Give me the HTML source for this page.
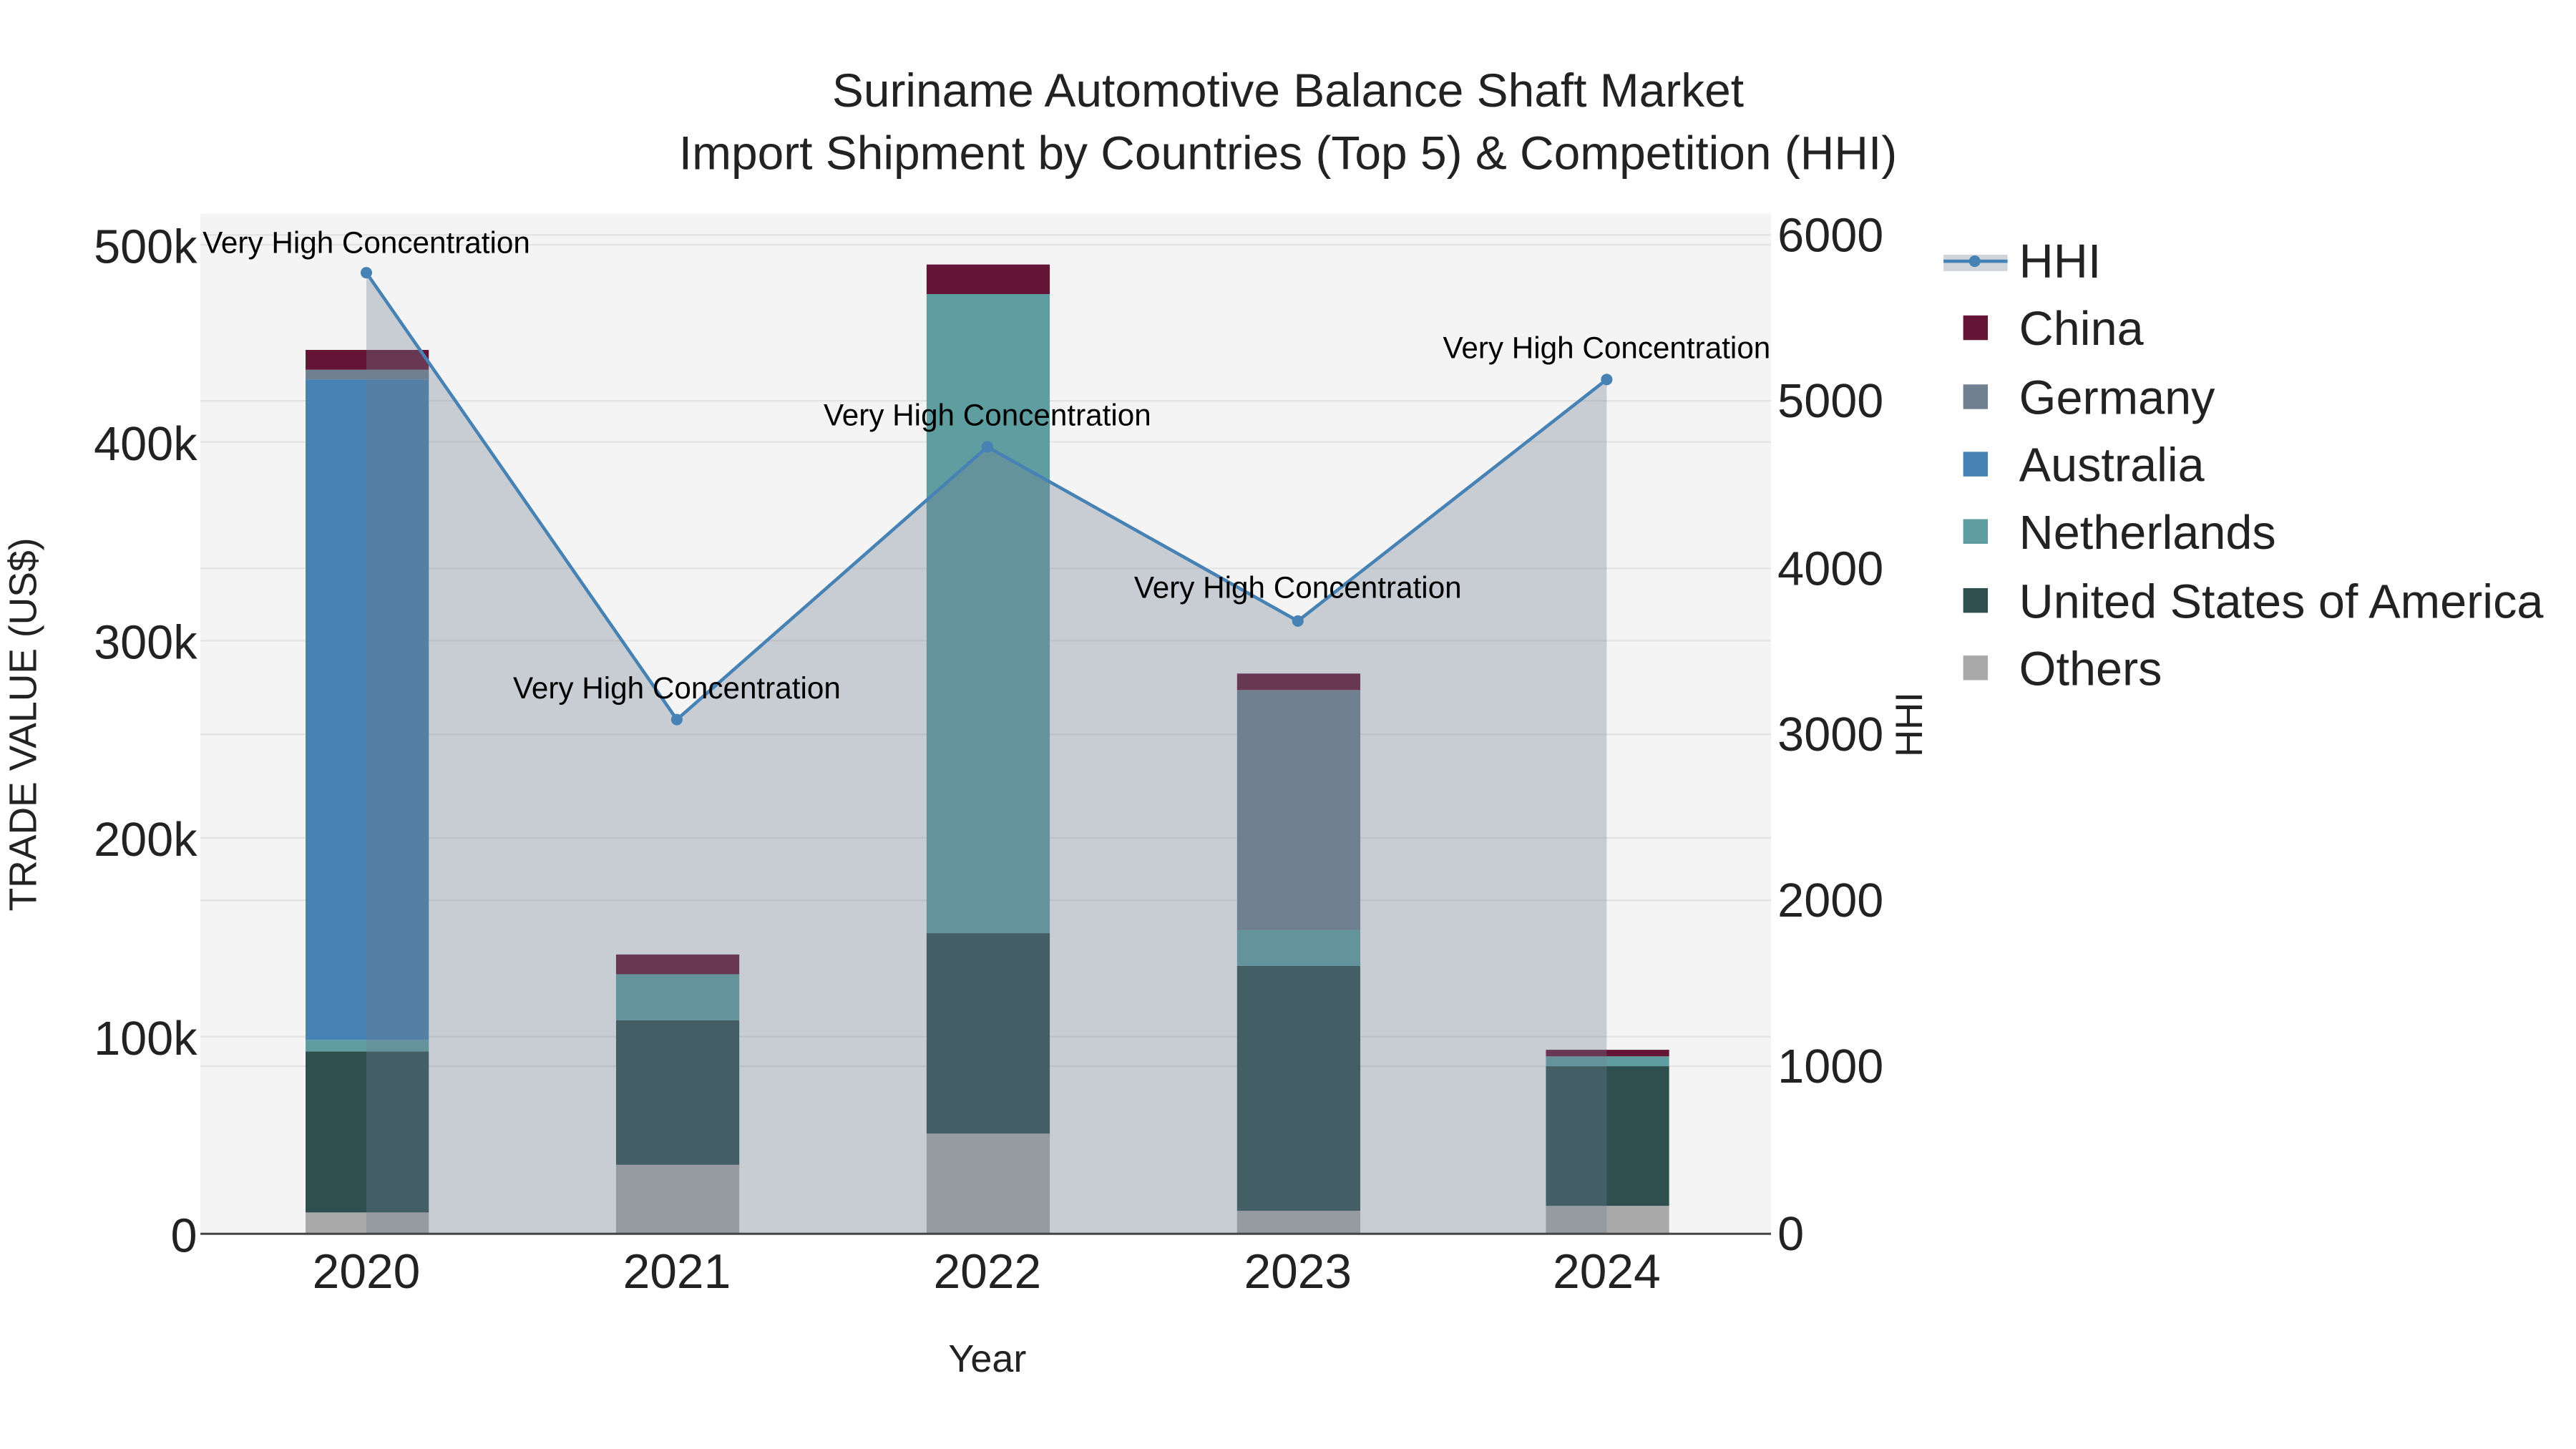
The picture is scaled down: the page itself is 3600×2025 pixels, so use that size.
<!DOCTYPE html>
<html><head><meta charset="utf-8"><style>
html,body{margin:0;padding:0;background:#fff;}
svg{display:block;}
text{font-family:"Liberation Sans",sans-serif;}
</style></head><body>
<svg width="3600" height="2025" viewBox="0 0 1568 882" preserveAspectRatio="xMinYMin meet" xmlns="http://www.w3.org/2000/svg">
<rect x="0" y="0" width="1600" height="900" fill="#fff"/>
<rect x="122" y="130" width="956" height="621" fill="#f4f4f4"/>
<g stroke="#e3e3e3" stroke-width="1">
<line x1="122" x2="1078" y1="149" y2="149"/>
<line x1="122" x2="1078" y1="269" y2="269"/>
<line x1="122" x2="1078" y1="390" y2="390"/>
<line x1="122" x2="1078" y1="510" y2="510"/>
<line x1="122" x2="1078" y1="631" y2="631"/>
<line x1="122" x2="1078" y1="143" y2="143"/>
<line x1="122" x2="1078" y1="244" y2="244"/>
<line x1="122" x2="1078" y1="346" y2="346"/>
<line x1="122" x2="1078" y1="447" y2="447"/>
<line x1="122" x2="1078" y1="548" y2="548"/>
<line x1="122" x2="1078" y1="649" y2="649"/>
</g>
<g>
<rect x="186" y="738" width="75" height="13" fill="#a9a9a9"/>
<rect x="186" y="640" width="75" height="98" fill="#2f4f4f"/>
<rect x="186" y="633" width="75" height="7" fill="#5f9ea0"/>
<rect x="186" y="231" width="75" height="402" fill="#4682b4"/>
<rect x="186" y="225" width="75" height="6" fill="#708090"/>
<rect x="186" y="213" width="75" height="12" fill="#641536"/>
</g>
<g>
<rect x="375" y="709" width="75" height="42" fill="#a9a9a9"/>
<rect x="375" y="621" width="75" height="88" fill="#2f4f4f"/>
<rect x="375" y="593" width="75" height="28" fill="#5f9ea0"/>
<rect x="375" y="581" width="75" height="12" fill="#641536"/>
</g>
<g>
<rect x="564" y="690" width="75" height="61" fill="#a9a9a9"/>
<rect x="564" y="568" width="75" height="122" fill="#2f4f4f"/>
<rect x="564" y="179" width="75" height="389" fill="#5f9ea0"/>
<rect x="564" y="161" width="75" height="18" fill="#641536"/>
</g>
<g>
<rect x="753" y="737" width="75" height="14" fill="#a9a9a9"/>
<rect x="753" y="588" width="75" height="149" fill="#2f4f4f"/>
<rect x="753" y="566" width="75" height="22" fill="#5f9ea0"/>
<rect x="753" y="420" width="75" height="146" fill="#708090"/>
<rect x="753" y="410" width="75" height="10" fill="#641536"/>
</g>
<g>
<rect x="941" y="734" width="75" height="17" fill="#a9a9a9"/>
<rect x="941" y="649" width="75" height="85" fill="#2f4f4f"/>
<rect x="941" y="643" width="75" height="6" fill="#5f9ea0"/>
<rect x="941" y="639" width="75" height="4" fill="#641536"/>
</g>
<polygon points="223,166 412,438 601,272 790,378 978,231 978,751 223,751" fill="rgb(112,124,145)" fill-opacity="0.33"/>
<polyline points="223,166 412,438 601,272 790,378 978,231" fill="none" stroke="#4682b4" stroke-width="2"/>
<g fill="#4682b4">
<circle cx="223" cy="166" r="3.5"/><circle cx="412" cy="438" r="3.5"/><circle cx="601" cy="272" r="3.5"/><circle cx="790" cy="378" r="3.5"/><circle cx="978" cy="231" r="3.5"/>
</g>
<line x1="122" x2="1078" y1="751" y2="751" stroke="#444" stroke-width="1.3"/>
<g font-size="18.4" text-anchor="middle" fill="#000">
<text x="223" y="154">Very High Concentration</text>
<text x="412" y="425">Very High Concentration</text>
<text x="601" y="259">Very High Concentration</text>
<text x="790" y="364">Very High Concentration</text>
<text x="978" y="218">Very High Concentration</text>
</g>
<g font-size="28.7" text-anchor="middle" fill="#222">
<text x="784" y="65">Suriname Automotive Balance Shaft Market</text>
<text x="784" y="103">Import Shipment by Countries (Top 5) &amp; Competition (HHI)</text>
</g>
<g font-size="29" text-anchor="end" fill="#222">
<text x="120" y="160">500k</text>
<text x="120" y="280">400k</text>
<text x="120" y="401">300k</text>
<text x="120" y="521">200k</text>
<text x="120" y="642">100k</text>
<text x="120" y="762">0</text>
</g>
<g font-size="29" text-anchor="start" fill="#222">
<text x="1082" y="153">6000</text>
<text x="1082" y="254">5000</text>
<text x="1082" y="356">4000</text>
<text x="1082" y="457">3000</text>
<text x="1082" y="558">2000</text>
<text x="1082" y="659">1000</text>
<text x="1082" y="761">0</text>
</g>
<g font-size="29.5" text-anchor="middle" fill="#222">
<text x="223" y="784">2020</text>
<text x="412" y="784">2021</text>
<text x="601" y="784">2022</text>
<text x="790" y="784">2023</text>
<text x="978" y="784">2024</text>
</g>
<text x="601" y="835" font-size="23.5" text-anchor="middle" fill="#222">Year</text>
<text transform="translate(22,441) rotate(-90)" font-size="23.3" text-anchor="middle" fill="#222">TRADE VALUE (US$)</text>
<text transform="translate(1170,441) rotate(-90)" font-size="23" text-anchor="middle" fill="#222">HHI</text>
<g>
<rect x="1183" y="155" width="39" height="10" fill="rgb(112,124,145)" fill-opacity="0.33"/>
<line x1="1183" x2="1222" y1="159" y2="159" stroke="#4682b4" stroke-width="2"/>
<circle cx="1202" cy="159" r="3.5" fill="#4682b4"/>
<rect x="1195" y="192" width="15" height="15" fill="#641536"/>
<rect x="1195" y="234" width="15" height="15" fill="#708090"/>
<rect x="1195" y="275" width="15" height="15" fill="#4682b4"/>
<rect x="1195" y="316" width="15" height="15" fill="#5f9ea0"/>
<rect x="1195" y="358" width="15" height="15" fill="#2f4f4f"/>
<rect x="1195" y="399" width="15" height="15" fill="#a9a9a9"/>
</g>
<g font-size="29" fill="#222">
<text x="1229" y="169">HHI</text>
<text x="1229" y="210">China</text>
<text x="1229" y="252">Germany</text>
<text x="1229" y="293">Australia</text>
<text x="1229" y="334">Netherlands</text>
<text x="1229" y="376">United States of America</text>
<text x="1229" y="417">Others</text>
</g>
</svg>
</body></html>
